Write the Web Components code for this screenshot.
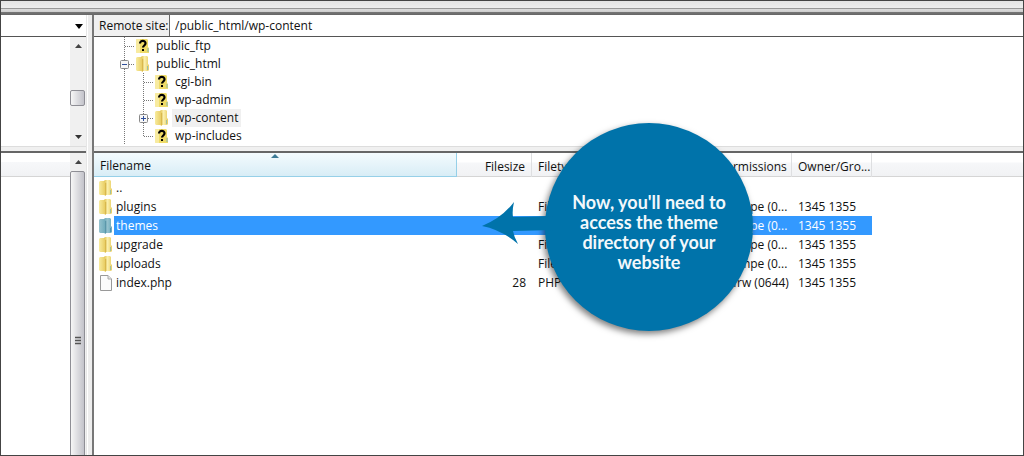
<!DOCTYPE html>
<html lang="en">
<head>
<meta charset="utf-8">
<title>Remote site browser</title>
<style>
html,body{margin:0;height:100%}
body{font:12px/18px "Open Sans","Noto Sans",sans-serif;color:#111;background:#fff}
</style>
</head>
<body>
<site-manager></site-manager>
<script>
const define=(name,html)=>customElements.define(name,class extends HTMLElement{
  connectedCallback(){
    if(this.shadowRoot)return;
    const root=this.attachShadow({mode:"open"});
    const t=document.createElement("template");
    t.innerHTML=typeof html==="function"?html(this):html;
    root.append(t.content.cloneNode(true));
  }
});

const folderArt=`
 <defs><linearGradient id="b" x1="0" x2="1"><stop offset="0" stop-color="var(--f1,#f8ec9f)"/><stop offset="1" stop-color="var(--f2,#e6c85a)"/></linearGradient>
 <linearGradient id="c" x1="0" x2="1"><stop offset="0" stop-color="var(--f3,#dfc04c)"/><stop offset=".45" stop-color="var(--f1,#fbf0ae)"/><stop offset="1" stop-color="var(--f2,#e8cd62)"/></linearGradient></defs>
 <path d="M5 1 6 0H11L12 1V8L13 9V14L12 15H5Z" fill="url(#c)"/>
 <path d="M0 2 1 1H5L7 3V16L5 15H1L0 14Z" fill="url(#b)"/>
 <path d="M6.7 3V15" stroke="var(--f5,#cfae42)" stroke-width=".8"/>
 <path d="M11.5 10V14" stroke="var(--f6,#9fc0a4)"/>`;
define("file-icon",el=>{
  const k=el.getAttribute("kind");
  const art=k==="page"
   ?`<path d="M1.5 .5H9L12.5 4V15.5H1.5Z" fill="#fbfbfb" stroke="#999"/><path d="M9 .5V4H12.5" fill="#e5e5e5" stroke="#aaa"/>`
   :k==="unknown"
   ?`<path d="M0 2 1 1H11L12 2V9L13 10V15H1L0 14Z" fill="#efdb68"/><path d="M0 2 1 1H4V15H1L0 14Z" fill="#f8eba0"/><path d="M12 10V14" stroke="#86b7b4"/><path d="M4 5.6C4 1.8 9.7 2 9.5 5.4 9.4 7.6 7 7.4 7 9.6" fill="none" stroke="#000" stroke-width="2.2"/><rect x="6" y="11" width="2" height="2" fill="#000"/>`
   :folderArt;
  return `<style>:host{display:block;flex:none;width:13px;height:16px}
   :host([kind=open]){--f1:#96c3cf;--f2:#6ba9ba;--f3:#6ea9b9;--f5:#528ca0;--f6:#4d91b5}
   svg{display:block}</style><svg width="13" height="16" viewBox="0 0 13 16" aria-hidden="true">${art}</svg>`;
});

/* One row of the directory tree; "guides" lists the connector cells from left to right. */
define("tree-row",el=>{
  const cell=g=>{
    if(g==="plus"||g==="minus"){
      return `<button aria-label="${g==="plus"?"Expand":"Collapse"}"><svg width="19" height="18"><g stroke="#777" stroke-dasharray="1 1"><path d="M9.5 0V18M14 9.5H20"/></g><rect x="5.5" y="5.5" width="8" height="8" rx="1" fill="#f7f7f7" stroke="#888"/><path d="M7 9.5H12${g==="plus"?"M9.5 7V12":""}" stroke="#2f4f9a"/></svg></button>`;
    }
    const p={v:'<path d="M9.5 0V18"/>',t:'<path d="M9.5 0V18M10 9.5H20"/>',l:'<path d="M9.5 0V10"/><path d="M10 9.5H20"/>'}[g];
    return `<svg width="19" height="18" stroke="#777" stroke-dasharray="1 1" aria-hidden="true">${p}</svg>`;
  };
  return `<style>:host{display:flex;align-items:center;height:18px;padding-left:21px}
   svg{display:block}button{all:unset;display:block}
   file-icon{margin:0 4px 0 2px}
   span{padding:0 3px;line-height:18px}
   :host([current]) span{background:#f0f0f0}</style>
   ${el.getAttribute("guides").split(" ").map(cell).join("")}
   <file-icon kind="${el.getAttribute("kind")}"></file-icon><span><slot></slot></span>`;
});

define("scroll-bar",el=>`<style>
 :host{display:flex;flex-direction:column;width:16px;background:#f0f0f0}
 button{all:unset;display:grid;place-items:center;height:18px}
 .track{flex:1;display:flex;flex-direction:column}
 .thumb{box-sizing:border-box;width:15px;height:16px;border:1px solid #8e8e95;border-radius:2px;background:linear-gradient(90deg,#f6f6f6,#dcdce0 50%,#c3c3ca);display:grid;place-items:center}
 :host([kind=small]) .track{padding-top:35px}
 /* The long thumb runs on below the visible part of the pane. */
 :host([kind=long]) .thumb{flex:1;margin-bottom:-54px}
 </style>
 <button aria-label="Scroll up"><svg width="7" height="4"><path d="M0 4 3.5 0 7 4Z" fill="#444"/></svg></button>
 <div class="track"><div class="thumb">${el.getAttribute("kind")==="long"?'<svg width="8" height="9"><path d="M1 1.5H7M1 4.5H7M1 7.5H7" stroke="#555" stroke-width="1.5"/></svg>':""}</div></div>
 ${el.getAttribute("kind")==="small"?'<button aria-label="Scroll down"><svg width="7" height="4"><path d="M0 0 3.5 4 7 0Z" fill="#333"/></svg></button>':""}`);

define("local-pane",`<style>
 :host{display:grid;grid-template-rows:22px 109px 7px 1fr;min-height:0}
 .combo{position:relative;border-bottom:1px solid #555;display:flex}
 select{appearance:none;border:0;margin:0;flex:1;width:100%;background:#fff}
 .combo svg{position:absolute;right:3px;top:9px;pointer-events:none}
 .view{display:flex;justify-content:flex-end}
 .split{background:#f0f0f0;border-top:1px solid #ddd;border-bottom:2px solid #666;box-sizing:border-box}
 .list{flex:1}
 .head{height:14px;margin-top:9px;background:linear-gradient(#f7f8fa,#f1f2f4);border-bottom:1px solid #d5d5d5}
 </style>
 <div class="combo"><select aria-label="Local site"></select><svg width="8" height="5"><path d="M0 0H8L4 5Z" fill="#000"/></svg></div>
 <div class="view"><scroll-bar kind="small"></scroll-bar></div>
 <div class="split"></div>
 <div class="view"><div class="list"><div class="head"></div></div><scroll-bar kind="long"></scroll-bar></div>`);

define("remote-tree",`<style>:host{display:block;overflow:hidden}</style>
 <tree-row guides="t" kind="unknown">public_ftp</tree-row>
 <tree-row guides="minus" kind="folder">public_html</tree-row>
 <tree-row guides="v t" kind="unknown">cgi-bin</tree-row>
 <tree-row guides="v t" kind="unknown">wp-admin</tree-row>
 <tree-row guides="v plus" kind="folder" current>wp-content</tree-row>
 <tree-row guides="v l" kind="unknown">wp-includes</tree-row>`);

const files=[["folder","..","","","",""],["folder","plugins","","File","flcdmpe (0...","1345 1355"],["open","themes","","File","flcdmpe (0...","1345 1355"],["folder","upgrade","","File","flcdmpe (0...","1345 1355"],["folder","uploads","","File","flcdmpe (0...","1345 1355"],["page","index.php","28","PHP File","adfrw (0644)","1345 1355"]];
define("file-list",()=>`<style>
 :host{display:block;background:linear-gradient(#fff 9px,#f6f7f9 10px,#f1f2f4 23px,#d5d5d5 23px,#d5d5d5 24px,transparent 24px) no-repeat 0 0/100% 24px}
 table{border-collapse:separate;border-spacing:0;table-layout:fixed;width:778px}
 th{position:relative;box-sizing:border-box;height:24px;font-weight:400;text-align:left;padding:3px 6px 0;border-right:1px solid #dedfe1;white-space:nowrap}
 th.sorted{background:linear-gradient(#f3fafd,#e6f4fa 50%,#d8edf6);border-right-color:#96d0e8;border-bottom:1px solid #96d0e8}
 th svg{position:absolute;left:50%;top:1px;margin-left:-4px}
 td{padding:0 6px;height:19px;line-height:19px;white-space:nowrap;overflow:hidden}
 th.num,td.num{text-align:right}
 td.name{padding:0 0 0 5px}
 .name div{display:flex;align-items:center}
 .name span{flex:1;margin-left:2px;padding-left:2px}
 .sel td:not(.name),.sel span{background:#3399ff;color:#fff}
 tbody::before{content:"";display:block;height:1px}
 </style>
 <table><colgroup><col style="width:363px"><col style="width:75px"><col style="width:181px"><col style="width:79px"><col></colgroup>
 <thead><tr><th class="sorted" aria-sort="ascending">Filename<svg width="8" height="4"><path d="M0 4 4 0 8 4Z" fill="#3c7a96"/></svg></th><th class="num">Filesize</th><th>Filetype</th><th>Permissions</th><th>Owner/Gro...</th></tr></thead>
 <tbody>${files.map(f=>`<tr${f[0]==="open"?' class="sel"':""}><td class="name"><div><file-icon kind="${f[0]}"></file-icon><span>${f[1]}</span></div></td><td class="num">${f[2]}</td><td>${f[3]}</td><td>${f[4]}</td><td>${f[5]}</td></tr>`).join("")}</tbody></table>`);

define("remote-pane",`<style>
 :host{display:grid;grid-template-rows:22px 109px 7px 1fr;min-width:0;border-left:2px solid #777}
 .path{display:flex;border-bottom:1px solid #555}
 label{box-sizing:border-box;width:76px;padding-left:5px;line-height:21px;background:#f0f0f0;border-right:1px solid #666;white-space:nowrap}
 input{flex:1;min-width:0;border:0;outline:0;padding:0 5px;margin:0;font:inherit;color:inherit;background:#fff}
 .split{background:#f0f0f0;border-top:1px solid #ddd;border-bottom:2px solid #666;box-sizing:border-box}
 </style>
 <div class="path"><label for="p">Remote site:</label><input id="p" value="/public_html/wp-content"></div>
 <remote-tree></remote-tree><div class="split"></div><file-list></file-list>`);

define("step-callout",`<style>
 :host{display:grid;place-items:center;width:208px;height:208px;border-radius:50%;background:#0073aa;color:#f2f8fb;box-shadow:-2px 3px 6px rgba(0,0,0,.5);font:700 18px/20px Lato,sans-serif;text-align:center}
 p{margin:0;padding-top:10px;width:176px}
 svg{position:absolute;left:-63px;top:79px}
 </style>
 <svg width="72" height="44" viewBox="0 0 72 44" aria-hidden="true"><path d="M0 24Q20 16 32 0Q30 9 31 15L72 14V28L31 29Q32 35 36 42Q20 28 0 24Z" fill="#0073aa"/></svg>
 <p><slot></slot></p>`);

define("site-manager",`<style>
 :host{box-sizing:border-box;position:relative;display:grid;grid-template-rows:14px 1fr;min-height:100vh;border:1px solid #444;overflow:hidden}
 .bar{background:linear-gradient(#e4e4e4,#eeeeee 7px,#999 7px,#999 8px,#ddd 8px,#ccc 11px,#777 11px,#666 14px)}
 .panes{display:grid;grid-template-columns:85px 6px 1fr;min-height:0}
 .gutter{background:linear-gradient(90deg,#e6e6e6 1px,#fff 1px,#fff 2px,#ededed 2px)}
 step-callout{position:absolute;left:544px;top:122px}
 </style>
 <div class="bar"></div>
 <div class="panes"><local-pane></local-pane><div class="gutter"></div><remote-pane></remote-pane></div>
 <step-callout>Now, you'll need to<br>access the theme<br>directory of your<br>website</step-callout>`);
</script>
</body>
</html>
